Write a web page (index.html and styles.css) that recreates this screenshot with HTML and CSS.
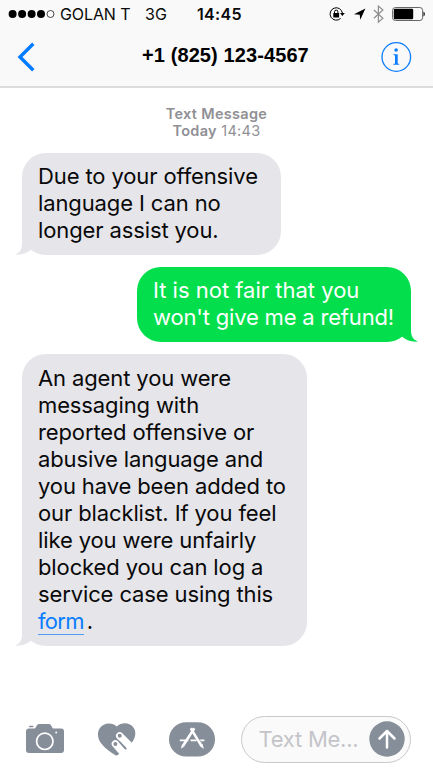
FILE: index.html
```html
<!DOCTYPE html>
<html lang="en">
<head>
<meta charset="utf-8">
<title>Messages</title>
<link rel="stylesheet" href="styles.css">
</head>
<body>
<div class="phone">
  <header class="top">
    <div class="status">
      <svg class="signal" width="48" height="10" viewBox="0 0 48 10"><g fill="#000"><circle cx="4.6" cy="5" r="4"/><circle cx="14.1" cy="5" r="4"/><circle cx="23.6" cy="5" r="4"/><circle cx="33" cy="5" r="4"/></g><circle cx="42.5" cy="5" r="3.5" fill="none" stroke="#222" stroke-width=".8"/></svg>
      <span class="carrier">GOLAN T</span>
      <span class="network">3G</span>
      <span class="clock">14:45</span>
      <svg class="indicators" width="98" height="22" viewBox="328 3 98 22">
        <path d="M340.6 18.400A6.200 6.200 0 1 1 342.400 13" fill="none" stroke="#000" stroke-width="1"/>
        <path d="M340 13h4.800l-2.400 3z"/>
        <rect x="333.300" y="13" width="5.800" height="4.400" rx=".5"/>
        <path d="M334.500 13v-1.200a1.700 1.700 0 0 1 3.400 0V13" fill="none" stroke="#000" stroke-width="1"/>
        <path d="M365.400 8.600l-5.100 11.200-.6-5.100-5.700-.5z"/>
        <path d="M373.900 10l9 8.200-4.500 4V6l4.500 4-9 8.200" fill="none" stroke="#8e8e90" stroke-width="1.200"/>
        <rect x="392.600" y="7.500" width="30" height="13" rx="2.800" fill="none" stroke="#555" stroke-width=".9"/>
        <rect x="393.800" y="8.700" width="19.400" height="10.600" rx="1.300"/>
        <path d="M423.500 11.500a3 3 0 0 1 0 5z"/>
      </svg>
    </div>
    <div class="nav">
      <svg class="back" width="18" height="30" viewBox="0 0 18 30"><path d="M16.300 1.800L3 15l13.300 13.200" fill="none" stroke="#007aff" stroke-width="3.400"/></svg>
      <h1 class="number">+1 (825) 123-4567</h1>
      <svg class="info" width="32" height="32" viewBox="0 0 32 32"><circle cx="16.300" cy="16" r="14.300" fill="none" stroke="#0b7dff" stroke-width="1.300"/><g fill="#0b7dff"><circle cx="16.100" cy="9" r="1.800"/><path d="M13.400 13.200h4.300v9.200l1.500.5v.8h-5.900v-.8l1.700-.5V14.500l-1.600-.4z"/></g></svg>
    </div>
  </header>
  <main class="thread">
    <div class="stamp"><div class="kind">Text Message</div><div class="when"><b>Today</b> 14:43</div></div>
    <div class="bubble received first">
      <div>Due to your offensive</div><div>language I can no</div><div>longer assist you.</div>
      <svg class="tail" width="24" height="26" viewBox="0 0 24 26"><path d="M7 0V16Q6.500 23.500 0 25.500Q9 26.500 15.500 21L24 16V0z"/></svg>
    </div>
    <div class="bubble sent">
      <div class="wide">It is not fair that you</div><div>won't give me a refund!</div>
      <svg class="tail" width="24" height="26" viewBox="0 0 24 26"><path d="M17 0V16Q17.500 23.500 24 25.500Q15 26.500 8.500 21L0 16V0z"/></svg>
    </div>
    <div class="bubble received last">
      <div>An agent you were</div><div>messaging with</div><div>reported offensive or</div><div>abusive language and</div><div>you have been added to</div><div>our blacklist. If you feel</div><div>like you were unfairly</div><div>blocked you can log a</div><div>service case using this</div><div><a class="link">form</a><span class="dot">.</span></div>
      <svg class="tail" width="24" height="26" viewBox="0 0 24 26"><path d="M7 0V16Q6.500 23.500 0 25.500Q9 26.500 15.500 21L24 16V0z"/></svg>
    </div>
  </main>
  <footer class="composer">
    <svg class="camera" width="40" height="32" viewBox="25 723 40 32"><g fill="#868e99"><rect x="29" y="725.800" width="4.500" height="1.500" rx=".7"/><path d="M29 728.500h5.500c1.800 0 1.800-4.500 4.500-4.500h10c2.700 0 2.700 4.500 4.500 4.500H61q3 0 3 3V750q0 3-3 3H29q-3 0-3-3v-18.500q0-3 3-3z"/></g><circle cx="44.800" cy="741.300" r="8.200" fill="none" stroke="#fff" stroke-width="1.700"/><circle cx="56.200" cy="732.500" r="1" fill="#fff"/></svg>
    <svg class="heart" width="40" height="36" viewBox="97 721 40 36">
      <path d="M116.800 726.500C112.500 722 103.500 722.200 99.700 728.200C96.500 733.500 98 739.500 101.500 743.800C105.300 748.400 110.500 752.700 116 755.500Q117.500 755.500 118.800 754.300L131.500 743C135.500 738.500 136.500 732 133.800 728C129.800 722 121.500 722 116.800 726.500z" fill="#868e99"/>
      <g fill="none" stroke-linecap="round"><path d="M115.400 743.900l10 11.500M119.700 735.800l14 14" stroke="#fff" stroke-width="7.400"/><path d="M119.500 741.700l6.500 7.300" stroke="#868e99" stroke-width="1.300"/></g>
      <g fill="#868e99"><circle cx="119.700" cy="735.800" r="2"/><circle cx="115.400" cy="743.900" r="2"/></g>
    </svg>
    <svg class="apps" width="46" height="36" viewBox="169 721 46 36"><rect x="169" y="722.300" width="46" height="34.200" rx="17.100" fill="#868e99"/><g fill="none" stroke="#fff"><path d="M179.800 740.300h8.500M190.500 740.300h6M199.800 740.300h4.600" stroke-width="1.800"/><path d="M194.300 728.300L183.200 745.500M190.800 728.300L201.300 745.500" stroke-width="2.600"/></g><path d="M181.900 744.500l2.700 1.800-3.700 2.500zM199.600 746l3-1.900 1.300 4.800z" fill="#fff"/><path d="M194.700 731.600l6.200 10" stroke="#868e99" stroke-width=".6"/></svg>
    <div class="field"><span class="placeholder">Text Me...</span><svg class="send" width="36" height="36" viewBox="0 0 36 36"><circle cx="18" cy="18" r="17.700" fill="#868e99"/><path d="M18 26.500V10M10.500 17.500L18 10l7.500 7.500" fill="none" stroke="#fff" stroke-width="2.500" stroke-linecap="round" stroke-linejoin="round"/></svg></div>
  </footer>
</div>
</body>
</html>
```
FILE: styles.css
```css
* { box-sizing: border-box; }
body { margin: 0; background: #fff; font-family: Inter, Roboto, sans-serif; color: #090909; }
.phone { width: 433px; height: 769px; display: flex; flex-direction: column; overflow: hidden; }
svg { display: block; flex: none; }
.top { height: 88px; flex: none; background: #f9f9f9; border-bottom: 2px solid #dcdcdd; }
.status { height: 28px; display: flex; align-items: center; padding: 0 7px 0 8px; white-space: nowrap; font-size: 16px; line-height: 20px; }
.carrier { width: 85px; margin-left: 4px; letter-spacing: -.1px; }
.network { width: 52px; letter-spacing: .1px; }
.clock { font-weight: 600; letter-spacing: .3px; }
.indicators { margin-left: auto; }
.nav { height: 58px; display: flex; align-items: center; padding: 0 21px 0 16px; }
.back { width: 20px; }
.number { margin: -5px auto 0 106px; font: bold 20px/24px "Liberation Sans", sans-serif; letter-spacing: .1px; color: #000; white-space: nowrap; }
.thread { flex: 1; padding: 16.500px 22px 0; display: flex; flex-direction: column; align-items: flex-start; }
.stamp { align-self: center; height: 48px; text-align: center; font-size: 14.5px; line-height: 17.5px; letter-spacing: .3px; color: #8f8f94; }
.kind, .when b { font-weight: 600; }
.bubble { position: relative; padding: 10px 16px; border-radius: 24px; font-size: 22px; line-height: 27px; letter-spacing: -.12px; white-space: nowrap; }
.bubble div { position: relative; z-index: 1; }
.received { background: #e5e5ea; }
.first { width: 259px; height: 102px; }
.sent { width: 274px; height: 75px; margin: 12.500px 0 12px; align-self: flex-end; background: #03df4c; color: #fff; letter-spacing: -.18px; }
.sent .wide { letter-spacing: 0; }
.last { width: 284.500px; height: 291.500px; padding-top: 10.500px; }
.tail { position: absolute; bottom: 0; left: -7px; fill: #e5e5ea; }
.sent .tail { left: auto; right: -7px; fill: #03df4c; }
.link { color: #0b7dff; border-bottom: 1.500px solid #4e9cf7; letter-spacing: -.7px; }
.dot { margin-left: 3px; }
.composer { height: 60px; flex: none; display: flex; align-items: center; padding: 0 22px 0 25px; }
.heart { margin-left: 32px; }
.apps { margin-left: 32px; }
.field { margin-left: auto; width: 170.500px; height: 47px; border: 1.500px solid #c8c8cd; border-radius: 24px; background: #fafafa; display: flex; align-items: center; justify-content: space-between; padding: 0 5px 0 17px; }
.placeholder { font-size: 22px; line-height: 28px; letter-spacing: -.25px; color: #c4c4c9; }
```
